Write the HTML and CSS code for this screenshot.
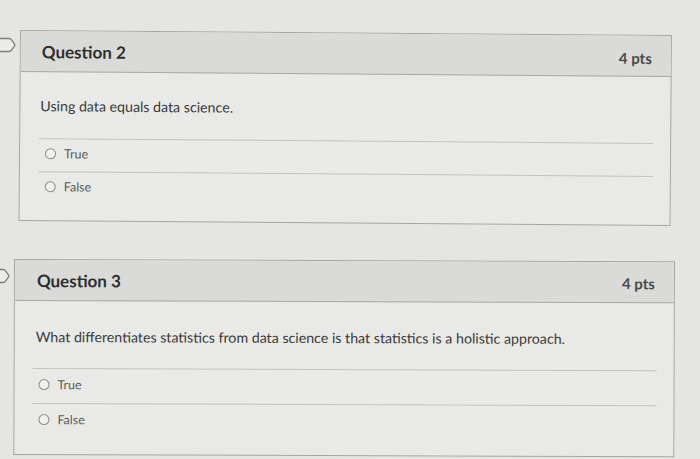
FILE: index.html
```html
<!DOCTYPE html>
<html>
<head>
<meta charset="utf-8">
<link rel="stylesheet" href="styles.css">
</head>
<body>
<div class="page">
  <div class="row row-q2">
    <svg class="flag flag-q2" width="20" height="16" viewBox="0 0 20 16"><path d="M1 1.5 H13 Q14.5 1.5 15.5 2.8 L18.6 7 Q19.2 8 18.6 9 L15.5 13.2 Q14.5 14.5 13 14.5 H1 Z" fill="#ecece9" stroke="#7d7d7b" stroke-width="1.3"/></svg>
    <section class="card card-q2">
      <header class="card-head">
        <h2 class="q-title">Question 2</h2>
        <span class="pts">4 pts</span>
      </header>
      <div class="card-body body-q2">
        <p class="q-text">Using data equals data science.</p>
        <div class="answer ans-q2"><span class="radio"></span><span class="label">True</span></div>
        <div class="answer ans-q2"><span class="radio"></span><span class="label">False</span></div>
      </div>
    </section>
  </div>
  <div class="row row-q3">
    <svg class="flag flag-q3" width="16" height="16" viewBox="0 0 16 16"><path d="M-3 1.5 H9 Q10.5 1.5 11.5 2.8 L14.6 7 Q15.2 8 14.6 9 L11.5 13.2 Q10.5 14.5 9 14.5 H-3 Z" fill="#ecece9" stroke="#7d7d7b" stroke-width="1.3"/></svg>
    <section class="card card-q3">
      <header class="card-head">
        <h2 class="q-title">Question 3</h2>
        <span class="pts">4 pts</span>
      </header>
      <div class="card-body body-q3">
        <p class="q-text">What differentiates statistics from data science is that statistics is a holistic approach.</p>
        <div class="answer ans-q3"><span class="radio"></span><span class="label">True</span></div>
        <div class="answer ans-q3"><span class="radio"></span><span class="label">False</span></div>
      </div>
    </section>
  </div>
</div>
</body>
</html>
```

FILE: styles.css
```css
* { box-sizing: border-box; }
html, body {
  margin: 0;
  height: 100%;
  background: #e5e5e3;
  font-family: Lato, "Open Sans", "Liberation Sans", sans-serif;
  overflow: hidden;
}
.page {
  padding-top: 30px;
  display: flex;
  flex-direction: column;
  gap: 38px;
}
.row {
  display: flex;
  align-items: flex-start;
  gap: 4px;
}
.flag { flex: none; display: block; }
.flag-q2 { margin-left: -4px; margin-top: 7px; }
.flag-q3 { margin-left: -6px; margin-top: 9px; }

.card {
  border: 1px solid #a6a6a4;
  background: #e9e9e7;
  transform-origin: left top;
}
.card-q2 { width: 652px; height: 191px; transform: rotate(0.45deg); }
.card-q3 { width: 661px; height: 196px; transform: rotate(0.2deg); }

.card-head {
  height: 41px;
  border-bottom: 1px solid #a9a9a7;
  background: #dadad8;
  display: flex;
  align-items: center;
  justify-content: space-between;
  padding: 0 19px 0 21px;
}
.card-q3 .card-head { padding-left: 22px; }
.q-title {
  margin: 0;
  font-size: 17px;
  font-weight: 700;
  color: #2e2e2e;
}
.pts {
  font-size: 15px;
  font-weight: 700;
  color: #4a4a4a;
  margin-top: 4px;
}
.card-q3 .pts { margin-top: 2px; }

.card-body {
  padding: 0 17px 16px 19px;
}
.body-q2 { padding-top: 24px; }
.body-q3 { padding-top: 26px; padding-left: 18px; }
.q-text {
  margin: 0 0 22px 1px;
  font-size: 14.2px;
  line-height: 20px;
  color: #3a3a3a;
}
.body-q3 .q-text { margin: 0 0 21px 3px; }

.answer {
  border-top: 1px solid #c2c2c0;
  display: flex;
  align-items: center;
  gap: 8px;
  font-size: 12.5px;
  color: #5a5a5a;
}
.ans-q2 { height: 33px; padding: 0 0 4px 6px; }
.ans-q3 { height: 35px; padding: 0 0 3px 6px; }
.radio {
  width: 11px;
  height: 11px;
  border: 1px solid #8a8a88;
  border-radius: 50%;
  background: #f0f0ee;
  flex: none;
}
```
